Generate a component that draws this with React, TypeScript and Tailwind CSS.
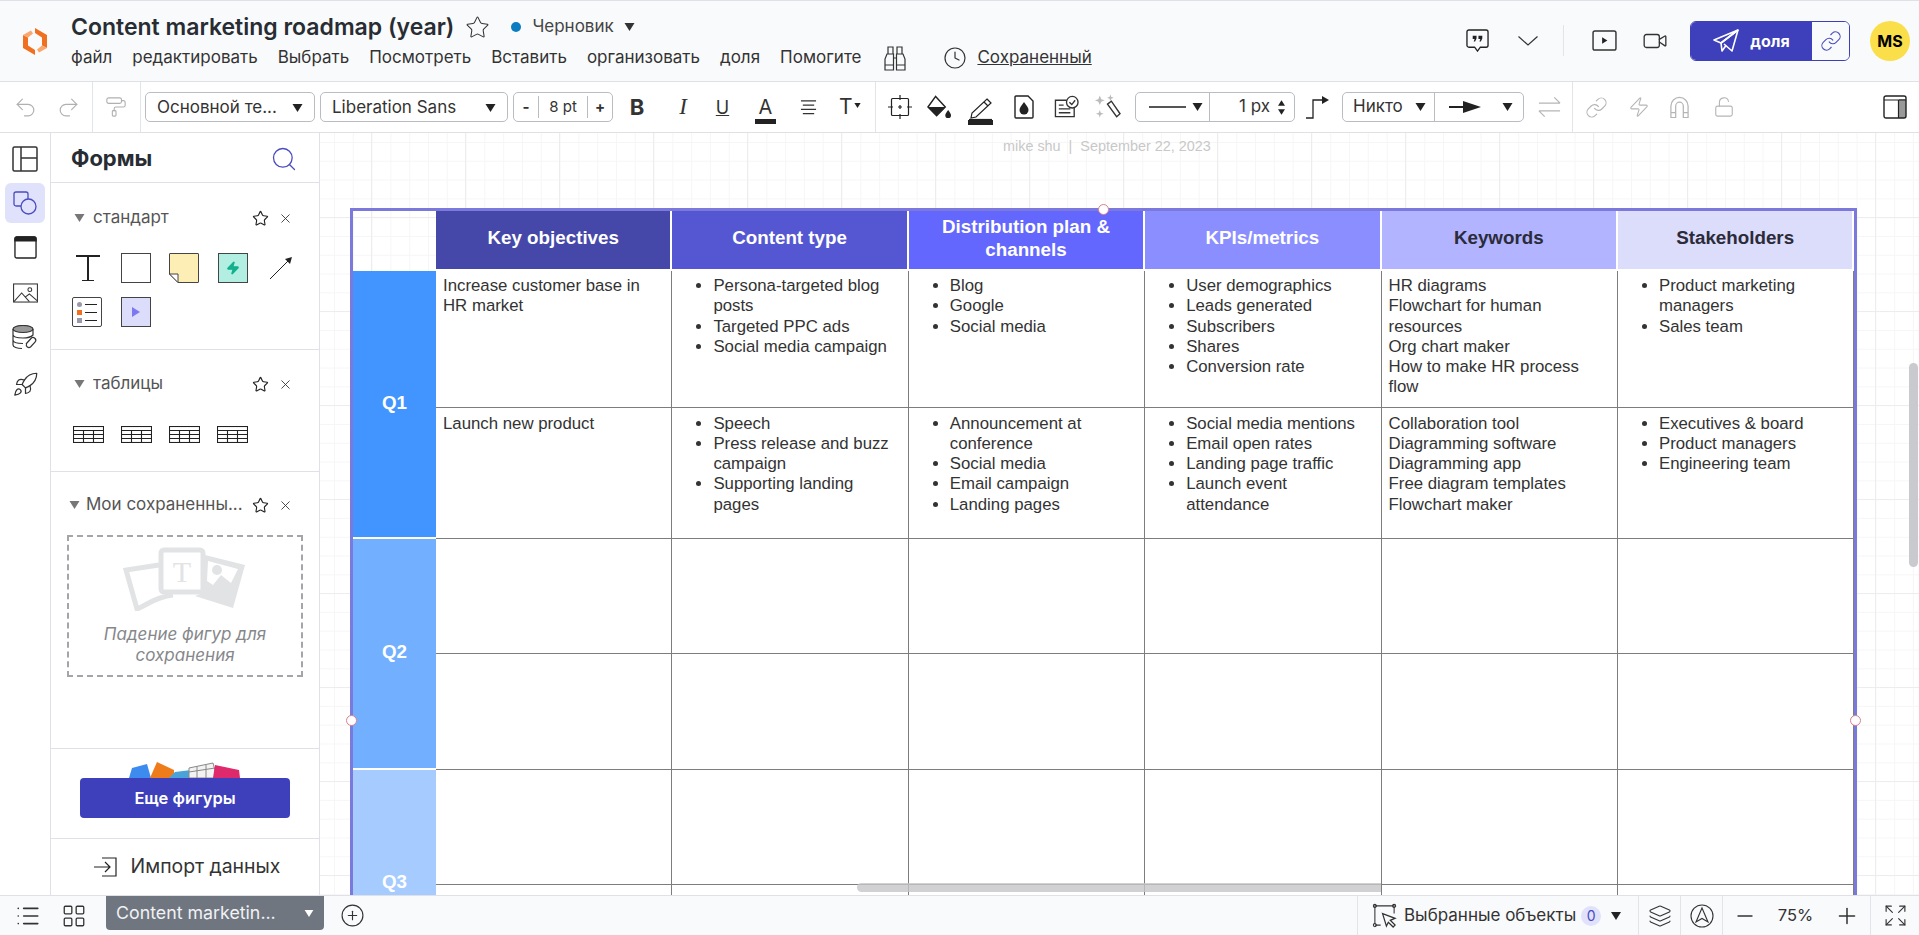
import {
  CirclePlus, Clock, Expand, Layers, LayoutGrid, Link, List, LockOpen, Minus, PaintRoller, Plus, Redo2, Rocket, Search, Star, Undo2, Video, X, Zap,
} from 'lucide-react';

const Tri = ({ className = 'w-[11px] h-[8px] text-[#222]' }: { className?: string }) => (
  <svg viewBox="0 0 10 8" className={className}><polygon points="0,0 10,0 5,8" fill="currentColor" /></svg>
);

const Logo = () => (
  <svg viewBox="0 0 24 27" className="w-[24px] h-[27px]">
    <path d="M0 7 L5 9.5 V17.5 L12 22 V27 L0 20 Z" fill="#f0701f" />
    <path d="M0 7 L8 2.5 L10 5.5 L5 9.5 Z" fill="#f9a76d" />
    <path d="M24 20 L19 17.5 V9.5 L12 5 V0 L24 7 Z" fill="#f0701f" />
    <path d="M24 20 L16 24.5 L14 21.5 L19 17.5 Z" fill="#f9a76d" />
  </svg>
);

const Plane = () => (
  <svg viewBox="0 0 26 24" className="w-[26px] h-[24px]" fill="none" stroke="white" strokeWidth="1.6" strokeLinejoin="round">
    <path d="M25 1 L1 11 L8 14 Z" /><path d="M25 1 L8 14 L9 22 L13 16.5" /><path d="M25 1 L19 22 L11 15" />
  </svg>
);

const BinocularsIcon = () => (
  <svg viewBox="0 0 22 25" className="w-[22px] h-[25px] ml-[3px]" fill="none" stroke="#333" strokeWidth="1.2">
    <path d="M4 1 H9 V8 H4 Z M13 1 H18 V8 H13 Z M3 8 H9.5 V24 H1 V13 Z M12.5 8 H19 L21 13 V24 H12.5 Z M9.5 12 H12.5 M1 19 H9.5 M12.5 19 H21" />
  </svg>
);
const Chevron = () => (
  <svg viewBox="0 0 20 10" className="w-[20px] h-[10px]" fill="none" stroke="#333" strokeWidth="1.2"><path d="M0.5 0.5 L10 9 L19.5 0.5" /></svg>
);
const TemplateIcon = () => (
  <svg viewBox="0 0 26 26" className="w-[26px] h-[26px]" fill="none" stroke="#333" strokeWidth="1.5">
    <rect x="1" y="1" width="24" height="24" rx="1.5" /><path d="M9 1 V25 M9 12 H25" />
  </svg>
);
const ShapesIcon = () => (
  <svg viewBox="0 0 24 24" className="w-[24px] h-[24px]" fill="none" stroke="#4a4cc0" strokeWidth="1.3">
    <path d="M8 15 H3 a2 2 0 0 1 -2 -2 V3 a2 2 0 0 1 2 -2 H13 a2 2 0 0 1 2 2 V8" /><circle cx="15.5" cy="15.5" r="7.5" />
  </svg>
);
const WindowIcon = () => (
  <svg viewBox="0 0 24 24" className="w-[23px] h-[23px]" fill="none" stroke="#222" strokeWidth="1.4">
    <rect x="1" y="1" width="22" height="22" rx="2" /><path d="M1 3 a2 2 0 0 1 2 -2 H21 a2 2 0 0 1 2 2 V5 H1 Z" fill="#222" />
  </svg>
);
const PictureIcon = () => (
  <svg viewBox="0 0 26 20" className="w-[25px] h-[20px]" fill="none" stroke="#333" strokeWidth="1.1">
    <rect x="0.6" y="0.6" width="24.8" height="18.8" /><circle cx="17.5" cy="6.5" r="2" /><path d="M1 19 L9 10 L17 19 M13 14 L17 11 L25 18" />
  </svg>
);
const DataIcon = () => (
  <svg viewBox="0 0 26 25" className="w-[26px] h-[25px]" fill="none" stroke="#333" strokeWidth="1.2">
    <ellipse cx="11" cy="4" rx="10" ry="3.5" fill="#999" />
    <path d="M1 4 V20 C1 22 5 23.5 10 23.5 M1 9.5 C1 11.5 5 13 11 13 C15 13 19 12 21 10 V4 M1 15 C1 17 5 18.5 11 18.5" />
    <path d="M14 19 L19 13.5 a2.6 2.6 0 0 1 4 3.6 L18.5 22 a2.6 2.6 0 0 1 -4 -3" fill="white" />
  </svg>
);
const CheckDocIcon = () => (
  <svg viewBox="0 0 26 24" className="w-[25px] h-[24px]" fill="none" stroke="#333" strokeWidth="1.4">
    <path d="M13 5 H1.5 V22 H21 V13" /><path d="M5 10 H10 M5 14 H17 M5 18 H17" /><circle cx="19" cy="7" r="6" /><path d="M16 7 L18.5 9.5 L22 5" />
  </svg>
);
const WandIcon = () => (
  <svg viewBox="0 0 28 26" className="w-[27px] h-[26px]">
    <path d="M14 10 L18 7 L27 20 L23.5 23 Z" fill="none" stroke="#333" strokeWidth="1.4" />
    <path d="M6 1 L7.5 5 L11 6 L7.5 7.5 L6 11 L4.5 7.5 L1 6 L4.5 5 Z" fill="#bbb" />
    <path d="M17 0 L18 2.5 L20.5 3.5 L18 4.5 L17 7 L16 4.5 L13.5 3.5 L16 2.5 Z" fill="#bbb" />
    <path d="M6 16 L7 19 L10 20 L7 21 L6 24 L5 21 L2 20 L5 19 Z" fill="#bbb" />
  </svg>
);
const CropIcon = () => (
  <svg viewBox="0 0 24 24" className="w-[24px] h-[24px]" fill="none" stroke="#222" strokeWidth="1.2">
    <rect x="3.5" y="3.5" width="17" height="17" rx="1" /><path d="M12 0 V5 M12 19 V24 M0 12 H5 M19 12 H24 M12 10 V14 M10 12 H14" />
  </svg>
);
const BucketIcon = () => (
  <svg viewBox="0 0 26 24" className="w-[25px] h-[24px]">
    <path d="M9 1 L19 12 L10 21 L1 12 Z" fill="none" stroke="#222" strokeWidth="1.5" />
    <path d="M1 12 H19 L10 21 Z" fill="#222" /><path d="M22 15 C24 18 25 19 25 20.5 A3 3 0 0 1 19 20.5 C19 19 20 18 22 15 Z" fill="#222" />
  </svg>
);
const PenIcon = () => (
  <svg viewBox="0 0 24 22" className="w-[24px] h-[22px]" fill="none" stroke="#222" strokeWidth="1.2">
    <path d="M18 1 L22 5 L7 19 L2 20 L3 15 Z M15 4 L19 8" /><path d="M0 21.5 H23" />
  </svg>
);
const DropDocIcon = () => (
  <svg viewBox="0 0 20 24" className="w-[20px] h-[24px]">
    <path d="M2 1 H14 L19 6 V22 a1 1 0 0 1 -1 1 H2 a1 1 0 0 1 -1 -1 V2 a1 1 0 0 1 1 -1 Z" fill="none" stroke="#222" strokeWidth="1.4" />
    <path d="M10 7 C13 11 14.5 13 14.5 15 A4.5 4.5 0 0 1 5.5 15 C5.5 13 7 11 10 7 Z" fill="#222" />
  </svg>
);
const CommentIcon = () => (
  <svg viewBox="0 0 24 24" className="w-[23px] h-[23px]" fill="none" stroke="#222" strokeWidth="1.4">
    <path d="M3 1 H21 a2 2 0 0 1 2 2 V17 a2 2 0 0 1 -2 2 H15 L12 23 L9 19 H3 a2 2 0 0 1 -2 -2 V3 a2 2 0 0 1 2 -2 Z" />
    <path d="M7 7 H11 V10 L9.5 13 H8 L9 10.5 H7 Z M13 7 H17 V10 L15.5 13 H14 L15 10.5 H13 Z" fill="#222" stroke="none" />
  </svg>
);
const PlayBoxIcon = () => (
  <svg viewBox="0 0 26 22" className="w-[25px] h-[21px]" fill="none" stroke="#333" strokeWidth="1.5">
    <rect x="1" y="1" width="24" height="20" rx="2" /><path d="M10.5 7.5 L16 11 L10.5 14.5 Z" fill="#222" stroke="none" />
  </svg>
);
const ConnectorIcon = () => (
  <svg viewBox="0 0 24 24" className="w-[24px] h-[24px]" fill="none" stroke="#222" strokeWidth="1.3">
    <path d="M0 23 H7 V5 H17" /><path d="M16 1 L23 5 L16 9 Z" fill="#222" stroke="none" />
  </svg>
);
const SwapIcon = () => (
  <svg viewBox="0 0 26 22" className="w-[25px] h-[22px]" fill="none" stroke="#b5b5b5" strokeWidth="1.3">
    <path d="M2 7 H24 M18 1 L24 7 M24 15 H2 M8 21 L2 15" />
  </svg>
);
const MagnetIcon = () => (
  <svg viewBox="0 0 22 24" className="w-[21px] h-[24px]" fill="none" stroke="#b5b5b5" strokeWidth="1.3">
    <path d="M2 23 V11 a9 9 0 0 1 18 0 V23 H15 V11 a4 4 0 0 0 -8 0 V23 Z M2 18 H7 M15 18 H20" />
  </svg>
);
const PanelIcon = () => (
  <svg viewBox="0 0 24 24" className="w-[24px] h-[24px]">
    <path d="M16 4 H23 V23 H16 Z" fill="#999" />
    <rect x="1" y="1" width="22" height="22" rx="2" fill="none" stroke="#222" strokeWidth="1.4" /><path d="M1 5 H23 M15.5 5 V23" stroke="#222" strokeWidth="1.2" />
  </svg>
);
const AlignIcon = () => (
  <svg viewBox="0 0 18 18" className="w-[17px] h-[17px]" fill="none" stroke="#333" strokeWidth="1.2">
    <path d="M1 2 H17 M3 6.5 H15 M1 11 H17 M3 15.5 H15" />
  </svg>
);
const StickyShape = () => (
  <svg viewBox="0 0 30 30" className="w-[30px] h-[30px]">
    <path d="M0.5 1 a0.5 0.5 0 0 1 0.5 -0.5 H29 a0.5 0.5 0 0 1 0.5 0.5 V29 a0.5 0.5 0 0 1 -0.5 0.5 H9 L0.5 21 Z" fill="#fdeeb5" stroke="#444" />
    <path d="M0.5 21 H9 V29.5 Z" fill="white" stroke="#444" />
  </svg>
);
const TableShape = () => (
  <svg viewBox="0 0 31 17" className="w-[31px] h-[17px]" fill="none" stroke="#222" strokeWidth="1.1">
    <rect x="0.5" y="0.5" width="30" height="16" /><path d="M0 4.5 H31 M0 8.5 H31 M0 12.5 H31 M10.5 4.5 V17 M20.5 4.5 V17" />
  </svg>
);
const SavedArt = () => (
  <svg viewBox="0 0 124 64" className="w-[124px] h-[64px]" fill="none" stroke="#e2e3e5" strokeWidth="5">
    <path d="M36 18 L3 23 L14 62 C24 58 32 50 50 48" />
    <rect x="38" y="3" width="42" height="42" rx="3" />
    <text x="59" y="35" fontFamily="Liberation Serif" fontSize="30" fill="#e2e3e5" stroke="none" textAnchor="middle">T</text>
    <path d="M82 8 L122 18 L110 61 L72 49 L80 46 Z" fill="#e2e3e5" stroke="none" />
    <path d="M85 14 L115 22 L108 36 L98 28 L90 38 L84 34 Z" fill="white" stroke="none" />
    <circle cx="94" cy="23" r="5" fill="#e2e3e5" stroke="none" />
  </svg>
);
const Fan = () => (
  <svg viewBox="0 0 113 16" className="w-[113px] h-[16px]">
    <path d="M0 16 L3 6 L18 2 L22 16 Z" fill="#3e8bf0" />
    <path d="M21 16 L28 0 L45 8 L45 16 Z" fill="#ef7c1a" />
    <path d="M40 16 L46 10 L62 8 L64 16 Z" fill="#4aa3d8" />
    <path d="M60 16 L60 6 L84 1 L88 16 Z M68 4.5 V16 M77 3 V16 M60 10 L86 6" fill="#f3f3f3" stroke="#888" strokeWidth="1" />
    <path d="M84 16 L86 3 L110 8 L111 16 Z" fill="#de2a6d" />
  </svg>
);

const ShapeHead = ({ title, pl = 'pl-[23px]', gap = 'w-[8px]' }: { title: string; pl?: string; gap?: string }) => (
  <div className={`flex items-center h-[24px] ${pl} pr-[26px] text-[17px] text-[#555]`}>
    <Tri className="w-[11px] h-[8px] text-[#777]" />
    <span className={gap} />
    <span className="flex-1 truncate">{title}</span>
    <Star className="w-[17px] h-[17px] text-[#222] ml-[8px]" strokeWidth={1.6} />
    <X className="w-[15px] h-[15px] text-[#333] ml-[9px]" strokeWidth={1.4} />
  </div>
);

const Sep = ({ className = '' }: { className?: string }) => <div className={`w-px self-stretch bg-[#e2e4e8] ${className}`} />;

const cols = ['Key objectives', 'Content type', 'Distribution plan & channels', 'KPIs/metrics', 'Keywords', 'Stakeholders'];
const headColors = ['bg-[#4547a9] text-white', 'bg-[#5557d2] text-white', 'bg-[#6467fe] text-white', 'bg-[#8a8eff] text-white', 'bg-[#b2b4ff] text-[#2b2b3a]', 'bg-[#dcdcfb] text-[#2b2b3a]'];

const Bullets = ({ items }: { items: string[] }) => (
  <ul className="list-disc pl-[34px]">{items.map((t) => <li key={t}>{t}</li>)}</ul>
);
const Lines = ({ items }: { items: string[] }) => <div>{items.map((t) => <div key={t}>{t}</div>)}</div>;

const row1 = [
  <Lines items={['Increase customer base in HR market']} />,
  <Bullets items={['Persona-targeted blog posts', 'Targeted PPC ads', 'Social media campaign']} />,
  <Bullets items={['Blog', 'Google', 'Social media']} />,
  <Bullets items={['User demographics', 'Leads generated', 'Subscribers', 'Shares', 'Conversion rate']} />,
  <Lines items={['HR diagrams', 'Flowchart for human resources', 'Org chart maker', 'How to make HR process flow']} />,
  <Bullets items={['Product marketing managers', 'Sales team']} />,
];
const row2 = [
  <Lines items={['Launch new product']} />,
  <Bullets items={['Speech', 'Press release and buzz campaign', 'Supporting landing pages']} />,
  <Bullets items={['Announcement at conference', 'Social media', 'Email campaign', 'Landing pages']} />,
  <Bullets items={['Social media mentions', 'Email open rates', 'Landing page traffic', 'Launch event attendance']} />,
  <Lines items={['Collaboration tool', 'Diagramming software', 'Diagramming app', 'Free diagram templates', 'Flowchart maker']} />,
  <Bullets items={['Executives & board', 'Product managers', 'Engineering team']} />,
];

const cell = 'bg-white border-r border-b border-[#7d7d7d] px-[7px] pt-[5px]';
const qCell = 'row-span-2 flex items-center justify-center pb-[2px] border-b-2 border-white text-white font-bold text-[18.8px]';

const Handle = ({ className }: { className: string }) => (
  <span className={`absolute w-[11px] h-[11px] rounded-full bg-white border-[1.5px] border-[#d9808c] ${className}`} />
);

export default function App() {
  return (
    <div className="w-[1919px] h-[935px] flex flex-col overflow-hidden bg-white text-[#222] font-['Inter',sans-serif]">
      {/* top bar */}
      <header className="h-[82px] shrink-0 flex bg-[#f9fafc] border-t border-t-[#dfe1e6] border-b border-b-[#dfe1e6]">
        <div className="w-[71px] flex items-center justify-center pr-[1px]"><Logo /></div>
        <div className="flex flex-col pt-[9px]">
          <div className="flex items-center h-[34px]">
            <span className="text-[23px] font-semibold text-[#282c33]">Content marketing roadmap (year)</span>
            <Star className="w-[25px] h-[25px] ml-[11px] text-[#333]" strokeWidth={1} />
            <span className="w-[10px] h-[10px] rounded-full bg-[#0a7cc1] ml-[21px]" />
            <span className="ml-[11px] text-[17px] text-[#444]">Черновик</span>
            <Tri className="w-[11px] h-[8px] text-[#333] ml-[10px]" />
          </div>
          <nav className="flex items-center gap-[20px] h-[28px] text-[17px] text-[#333]">
            <span>файл</span><span>редактировать</span><span>Выбрать</span><span>Посмотреть</span><span>Вставить</span><span>организовать</span><span>доля</span><span>Помогите</span>
            <BinocularsIcon />
            <Clock className="w-[24px] h-[24px] text-[#333] ml-[17px]" strokeWidth={1.2} />
            <span className="underline -ml-[10px]">Сохраненный</span>
          </nav>
        </div>
        <div className="ml-auto flex items-center pr-[9px] pb-[1px]">
          <CommentIcon />
          <span className="ml-[29px]"><Chevron /></span>
          <Sep className="my-[24px] ml-[25px]" />
          <span className="ml-[28px]"><PlayBoxIcon /></span>
          <Video className="w-[26px] h-[26px] ml-[25px] text-[#333]" strokeWidth={1.2} />
          <div className="ml-[22px] w-[160px] h-[40px] flex rounded-[6px] border border-[#3d40ba] overflow-hidden">
            <div className="w-[121px] bg-[#3d40ba] flex items-center justify-center gap-[11px] text-white font-bold text-[16px]"><Plane />доля</div>
            <div className="flex-1 bg-[#f9fafc] flex items-center justify-center"><Link className="w-[22px] h-[22px] text-[#4a4cc0]" strokeWidth={1.2} /></div>
          </div>
          <div className="ml-[20px] w-[40px] h-[40px] rounded-full bg-[#fbdf4a] flex items-center justify-center font-bold text-[16px] text-black">MS</div>
        </div>
      </header>

      {/* toolbar */}
      <div className="h-[51px] shrink-0 flex items-center border-b border-[#dfe1e6] bg-white text-[#333]">
        <Undo2 className="w-[25px] h-[25px] ml-[13px] text-[#b0b0b0]" strokeWidth={1.1} />
        <Redo2 className="w-[25px] h-[25px] ml-[18px] text-[#b0b0b0]" strokeWidth={1.1} />
        <Sep className="ml-[11px]" />
        <PaintRoller className="w-[22px] h-[26px] ml-[12px] text-[#b0b0b0]" strokeWidth={1.2} />
        <Sep className="ml-[13px]" />
        <div className="ml-[4px] w-[170px] h-[30px] flex items-center justify-between px-[11px] pt-[2px] border border-[#b9bcc2] rounded-[5px] text-[17px]">Основной те...<Tri /></div>
        <div className="ml-[5px] w-[188px] h-[30px] flex items-center justify-between px-[11px] pt-[2px] border border-[#b9bcc2] rounded-[5px] text-[17px]">Liberation Sans<Tri /></div>
        <div className="ml-[5px] w-[100px] h-[30px] flex items-center border border-[#b9bcc2] rounded-[5px] text-[15px]">
          <span className="w-[25px] text-center font-bold border-r border-[#b9bcc2]">-</span>
          <span className="w-[49px] text-center border-r border-[#b9bcc2]">8 pt</span>
          <span className="flex-1 text-center font-bold">+</span>
        </div>
        <span className="ml-[16px] w-[16px] text-[22px] font-bold text-center">B</span>
        <span className="ml-[31px] w-[14px] text-[23px] italic font-['Liberation_Serif',serif] text-center">I</span>
        <span className="ml-[25px] w-[15px] text-[18px] underline text-center">U</span>
        <div className="ml-[25px] w-[21px] flex flex-col items-center pt-[5px]"><span className="text-[20px] leading-[24px]">A</span><span className="w-full h-[5px] bg-[#222]" /></div>
        <span className="ml-[24px]"><AlignIcon /></span>
        <div className="ml-[22px] w-[24px] flex items-center"><span className="text-[21px]">T</span><Tri className="w-[7px] h-[5px] text-[#222] -mt-[3px] ml-[1px]" /></div>
        <Sep className="ml-[12px]" />
        <span className="ml-[12px]"><CropIcon /></span>
        <span className="ml-[15px]"><BucketIcon /></span>
        <div className="ml-[16px] w-[25px] flex flex-col items-center pt-[8px]"><PenIcon /><span className="w-full h-[5px] bg-[#222]" /></div>
        <span className="ml-[21px]"><DropDocIcon /></span>
        <span className="ml-[20px]"><CheckDocIcon /></span>
        <span className="ml-[15px]"><WandIcon /></span>
        <div className="ml-[14px] w-[160px] h-[30px] flex items-center border border-[#b9bcc2] rounded-[5px] text-[17px]">
          <div className="w-[74px] flex items-center justify-between pl-[13px] pr-[6px] border-r border-[#b9bcc2] h-full"><span className="w-[37px] h-[2px] bg-[#555]" /><Tri /></div>
          <span className="flex-1 text-right pr-[8px]">1 px</span>
          <div className="flex flex-col gap-[3px] pr-[9px]"><Tri className="w-[7px] h-[6px] text-[#222] rotate-180" /><Tri className="w-[7px] h-[6px] text-[#222]" /></div>
        </div>
        <span className="ml-[11px]"><ConnectorIcon /></span>
        <div className="ml-[12px] w-[182px] h-[30px] flex items-center border border-[#b9bcc2] rounded-[5px] text-[17px]">
          <div className="w-[92px] flex items-center justify-between pl-[10px] pr-[8px] border-r border-[#b9bcc2] h-full">Никто<Tri /></div>
          <div className="flex-1 flex items-center justify-between pl-[14px] pr-[10px]">
            <svg viewBox="0 0 32 12" className="w-[32px] h-[12px]"><path d="M0 6 H20" stroke="#222" strokeWidth="2" /><polygon points="14,0 32,6 14,12" fill="#222" /></svg><Tri />
          </div>
        </div>
        <span className="ml-[13px]"><SwapIcon /></span>
        <Sep className="ml-[10px]" />
        <Link className="w-[23px] h-[23px] ml-[12px] text-[#b5b5b5]" strokeWidth={1.2} />
        <Zap className="w-[22px] h-[24px] ml-[20px] text-[#b5b5b5]" strokeWidth={1.2} />
        <span className="ml-[19px]"><MagnetIcon /></span>
        <LockOpen className="w-[22px] h-[24px] ml-[23px] text-[#b5b5b5]" strokeWidth={1.2} />
        <span className="ml-auto mr-[12px]"><PanelIcon /></span>
      </div>

      {/* body */}
      <div className="flex-1 min-h-0 flex">
        <aside className="w-[51px] shrink-0 border-r border-[#dfe1e6] flex flex-col items-center pt-[13px] bg-white">
          <TemplateIcon />
          <div className="mt-[11px] w-[40px] h-[40px] rounded-[6px] bg-[#e0e1fb] flex items-center justify-center"><ShapesIcon /></div>
          <div className="mt-[13px]"><WindowIcon /></div>
          <div className="mt-[24px]"><PictureIcon /></div>
          <div className="mt-[22px]"><DataIcon /></div>
          <Rocket className="w-[27px] h-[27px] mt-[21px] text-[#333]" strokeWidth={1.1} />
        </aside>

        <aside className="w-[269px] shrink-0 border-r border-[#dfe1e6] flex flex-col bg-white">
          <div className="h-[50px] shrink-0 border-b border-[#dfe1e6] flex items-center justify-between pl-[20px] pr-[21px] pt-[2px]">
            <span className="text-[22px] font-bold text-[#282c33]">Формы</span>
            <Search className="w-[28px] h-[28px] text-[#4a4cc0]" strokeWidth={1.1} />
          </div>
          <div className="h-[167px] shrink-0 border-b border-[#dfe1e6] pt-[23px]">
            <ShapeHead title="стандарт" />
            <div className="grid grid-cols-[repeat(5,48.5px)] grid-rows-[30px_30px] gap-y-[14px] pl-[21px] mt-[23px] items-center">
              <span className="w-[24px] h-[26px] ml-[4px] flex flex-col items-center">
                <span className="w-full h-[1.5px] bg-[#222]" /><span className="w-[1.5px] flex-1 bg-[#222]" /><span className="w-[12px] h-[1.5px] bg-[#222]" />
              </span>
              <span className="w-[30px] h-[30px] border border-[#444]" />
              <StickyShape />
              <span className="w-[30px] h-[30px] bg-[#b2efe2] border border-[#444] flex items-center justify-center"><Zap className="w-[14px] h-[16px] text-[#14b08e]" fill="currentColor" /></span>
              <svg viewBox="0 0 24 24" className="w-[24px] h-[24px] ml-[3px]" fill="none"><path d="M1 23 L20 4" stroke="#222" strokeWidth="1" /><polygon points="23,1 21,8 16,3" fill="#222" /></svg>
              <span className="w-[30px] h-[30px] border border-[#444] rounded-[2px] flex flex-col justify-center gap-[3px] px-[4px]">
                <span className="flex items-center gap-[3px]"><span className="w-[5px] h-[5px] rounded-full bg-[#99a]" /><span className="flex-1 h-px bg-[#222]" /></span>
                <span className="flex items-center gap-[3px]"><span className="w-[5px] h-[5px] bg-[#f0701f]" /><span className="flex-1 h-px bg-[#222]" /></span>
                <span className="flex items-center gap-[3px]"><span className="w-[5px] h-[5px] bg-[#99a]" /><span className="flex-1 h-px bg-[#222]" /></span>
              </span>
              <span className="w-[30px] h-[30px] bg-[#dcdcfb] border border-[#444] flex items-center justify-center"><svg viewBox="0 0 8 10" className="w-[8px] h-[10px]"><polygon points="0,0 8,5 0,10" fill="#7b78f0" /></svg></span>
            </div>
          </div>
          <div className="h-[122px] shrink-0 border-b border-[#dfe1e6] pt-[22px]">
            <ShapeHead title="таблицы" />
            <div className="flex gap-[17px] pl-[22px] mt-[30px]"><TableShape /><TableShape /><TableShape /><TableShape /></div>
          </div>
          <div className="h-[277px] shrink-0 border-b border-[#dfe1e6] pt-[21px]">
            <ShapeHead title="Мои сохраненны..." pl="pl-[18px]" gap="w-[6px]" />
            <div className="mx-[16px] mt-[18px] w-[236px] h-[142px] border-2 border-dashed border-[#a3a5a9] flex flex-col items-center pt-[10px]">
              <SavedArt />
              <div className="mt-[13px] text-[17px] leading-[21px] italic text-[#85878b] text-center w-[175px]">Падение фигур для сохранения</div>
            </div>
          </div>
          <div className="h-[90px] shrink-0 border-b border-[#dfe1e6] px-[29px] pt-[13px] flex flex-col items-center">
            <Fan />
            <div className="w-[210px] h-[40px] rounded-[4px] bg-[#3d40ba] text-white font-semibold text-[16.5px] flex items-center justify-center">Еще фигуры</div>
          </div>
          <div className="flex-1 flex items-center justify-center gap-[13px] text-[19.4px] text-[#333] pl-[4px]">
            <svg viewBox="0 0 24 20" className="w-[24px] h-[20px]" fill="none" stroke="#222" strokeWidth="1.2"><path d="M8 1 H22 V19 H8 M0 10 H16 M11 5 L16 10 L11 15" /></svg>
            Импорт данных
          </div>
        </aside>

        {/* canvas */}
        <main className="relative flex-1 min-w-0 overflow-hidden bg-white bg-[linear-gradient(to_right,#ededed_1px,transparent_1px),linear-gradient(to_bottom,#ededed_1px,transparent_1px),linear-gradient(to_right,#f6f6f6_1px,transparent_1px),linear-gradient(to_bottom,#f6f6f6_1px,transparent_1px)] bg-size-[94px_94px,94px_94px,18.8px_18.8px,18.8px_18.8px] bg-position-[51px_84px,51px_84px,14px_9px,14px_9px]">
          <div className="h-[75px] pt-[4px] pl-[683px] text-[14.4px] leading-[18px] text-[#c8c8c8] font-['Liberation_Sans',sans-serif] whitespace-pre">mike shu  |  September 22, 2023</div>
          <div className="relative ml-[30px] w-[1507px] border-x-[3px] border-t-[3px] border-[#7b79dc] font-['Liberation_Sans',sans-serif] text-[16.8px] leading-[20.3px] text-[#333]">
            <div className="grid grid-cols-[83px_repeat(6,236.4px)] grid-rows-[60px_136.5px_131px_115.5px_115.5px_115px_115px]">
              <div />
              {cols.map((c, i) => (
                <div key={c} className={`flex items-center justify-center text-center px-[8px] pb-[5px] border-r-2 border-b-2 border-white font-bold text-[18.8px] leading-[23px] ${headColors[i]}`}>{c}</div>
              ))}
              <div className={`${qCell} bg-[#4295ff]`}>Q1</div>
              {row1.map((c, i) => <div key={i} className={cell}>{c}</div>)}
              {row2.map((c, i) => <div key={i} className={`${cell} pt-[6px]`}>{c}</div>)}
              <div className={`${qCell} bg-[#73afff]`}>Q2</div>
              {[0, 1, 2, 3, 4, 5, 6, 7, 8, 9, 10, 11].map((i) => <div key={i} className={cell} />)}
              <div className={`${qCell} bg-[#a6cbff] text-[#333]`}>Q3</div>
              {[0, 1, 2, 3, 4, 5, 6, 7, 8, 9, 10, 11].map((i) => <div key={i} className={cell} />)}
            </div>
            <Handle className="-top-[7px] left-[745px]" />
            <Handle className="top-[504px] -left-[7px]" />
            <Handle className="top-[504px] -right-[7px]" />
          </div>
          {/* scrollbars */}
          <div className="absolute right-[1px] top-[230px] w-[9px] h-[204px] rounded-full bg-[#c9cacd]" />
          <div className="absolute left-[537px] bottom-[3px] w-[524px] h-[9px] rounded-l-full bg-[#c5c6c8]/80" />
        </main>
      </div>

      {/* bottom bar */}
      <footer className="h-[40px] shrink-0 flex items-center bg-[#f9fafc] border-t border-[#dfe1e6] text-[#333]">
        <List className="w-[26px] h-[26px] ml-[15px]" strokeWidth={1.5} />
        <LayoutGrid className="w-[26px] h-[26px] ml-[20px]" strokeWidth={1.2} />
        <div className="ml-[19px] self-start w-[218px] h-[34px] flex items-center justify-between px-[10px] rounded-b-[4px] bg-[#6f7680] text-[#f1f2f4] text-[17.8px]">
          Content marketin...<Tri className="w-[10px] h-[7px] text-white" />
        </div>
        <CirclePlus className="w-[25px] h-[25px] ml-[16px]" strokeWidth={1.1} />
        <div className="ml-auto flex items-center h-full">
          <Sep />
          <div className="w-[280px] flex items-center pl-[14px] text-[17px]">
            <svg viewBox="0 0 26 26" className="w-[25px] h-[25px]" fill="none" stroke="#333" strokeWidth="1.1"><path d="M3 22 V3 H23 V11 M3 23 H9" /><circle cx="3" cy="3" r="1.6" /><circle cx="23" cy="3" r="1.6" /><circle cx="3" cy="23" r="1.6" /><path d="M11 11 L24 16 L19 18 L24 23 L22 25 L17 20 L15 24 Z" fill="#f9fafc" strokeWidth="1.3" /></svg>
            <span className="ml-[7px]">Выбранные объекты</span>
            <span className="ml-[5px] w-[20px] h-[20px] rounded-full bg-[#e0e1fb] text-[#4a4cc0] text-[14px] flex items-center justify-center">0</span>
            <Tri className="w-[10px] h-[8px] text-[#222] ml-[10px]" />
          </div>
          <Sep />
          <div className="w-[41px] flex justify-center"><Layers className="w-[24px] h-[24px]" strokeWidth={1.1} /></div>
          <Sep />
          <div className="w-[41px] flex justify-center">
            <svg viewBox="0 0 24 24" className="w-[24px] h-[24px]" fill="none" stroke="#333" strokeWidth="1.1"><circle cx="12" cy="12" r="11" /><path d="M12 4 L18 18 L12 14.5 L6 18 Z" /></svg>
          </div>
          <Sep />
          <div className="w-[147px] flex items-center justify-between px-[10px] text-[16.5px]">
            <Minus className="w-[24px] h-[24px]" strokeWidth={1.4} /><span>75%</span><Plus className="w-[26px] h-[26px]" strokeWidth={1.4} />
          </div>
          <Sep />
          <div className="w-[48px] flex justify-center"><Expand className="w-[25px] h-[25px]" strokeWidth={1.1} /></div>
        </div>
      </footer>
    </div>
  );
}
